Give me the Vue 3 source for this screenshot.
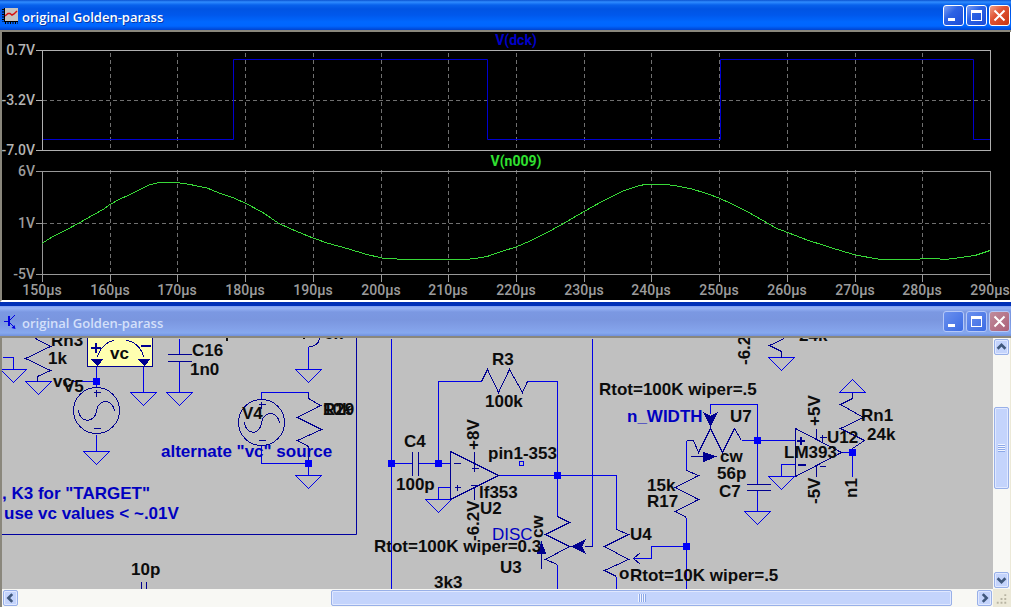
<script setup>
const ticks = [42, 110, 177, 245, 313, 381, 448, 516, 584, 651, 719, 787, 855, 922, 990]
const inner = ticks.slice(1, -1)

const grounds = [
  [13, 369], [38, 381], [143, 392], [179, 392], [96, 451], [308, 369], [308, 475],
  [438, 499], [757, 511], [781, 357], [781, 476],
]
const nodes = [
  [96, 381], [308, 463], [391, 463], [438, 463], [557, 475], [686, 546], [757, 440], [852, 452],
]
const resistors = [
  '35,338 50,346 25,358 50,370 37,376 37,381',
  '308,392 308,398 320,405 297,417 321,429 297,440 308,446 308,463',
  '481,381 487,369 498,392 509,369 522,392 527,381',
  '557,516 569,522 545,534 569,546 545,559 557,564',
  '616,529 628,534 604,546 628,559 604,570 616,576',
  '686,470 698,475 675,487 698,499 675,511 686,517',
  '686,440 693,440 698,452 710,428 722,452 734,428 741,440',
  '784,338 769,345 781,351 781,357',
  '852,448 864,440 840,428 863,417 840,404 852,398 852,392',
]
const labels = [
  [51, 346, 'Rn3'], [48, 364, '1k'], [53, 387, 'vc'], [63, 392, 'V5'], [110, 359, 'vc'],
  [192, 356, 'C16'], [190, 375, '1n0'], [242, 419, 'V4'], [323, 415, 'R29'], [323, 415, '10k'],
  [131, 575, '10p'], [492, 365, 'R3'], [485, 407, '100k'], [404, 447, 'C4'], [396, 490, '100p'],
  [488, 459, 'pin1-353'], [479, 498, 'lf353'], [480, 514, 'U2'], [374, 552, 'Rtot=100K wiper=0.3'],
  [500, 573, 'U3'], [434, 588, '3k3'], [630, 540, 'U4'], [619, 579, 'o'],
  [630, 581, 'Rtot=10K wiper=.5'], [647, 491, '15k'], [647, 507, 'R17'],
  [599, 395, 'Rtot=100K wiper=.5'], [730, 422, 'U7'], [720, 462, 'cw'], [717, 479, '56p'],
  [719, 497, 'C7'], [799, 341, '24k'], [784, 458, 'LM393'], [827, 443, 'U12'],
  [861, 421, 'Rn1'], [867, 440, '24k'], [324, 339, '6k'],
]
const comments = [
  [161, 457, 'alternate "vc" source'], [2, 499, ', K3 for "TARGET"'],
  [4, 519, 'use vc values < ~.01V'], [627, 422, 'n_WIDTH'],
]
const upright = [
  [479, 450, '+8V'], [479, 541, '-6.2V'], [543, 538, 'cw'], [750, 365, '-6.2V'],
  [820, 426, '+5V'], [820, 504, '-5V'], [857, 498, 'n1'],
]
</script>

<template>
  <main class="desk">
    <section class="win">
      <header class="bar">
        <svg class="ico" viewBox="0 0 16 16" aria-hidden="true">
          <path fill="#c6c3c0" d="M2 0h14v14H2z" />
          <path stroke="#000" fill="none" d="M2.500 0v14M2 13.500h14" />
          <path stroke="#000" fill="none" stroke-dasharray="1 1.500" stroke-width="2" d="M1 1v13M3 15h13" />
          <path stroke="#d81010" stroke-width="1.500" fill="none" d="M3 8l3-2.500 2 0 2 1.500 2-1 3-3" />
        </svg>
        <h1>original Golden-parass</h1>
        <div class="ctl">
          <button aria-label="Minimize"><svg viewBox="0 0 21 21"><path fill="#fff" d="M5 13h7v3H5z" /></svg></button>
          <button aria-label="Maximize"><svg viewBox="0 0 21 21"><path fill="#fff" fill-rule="evenodd" d="M5 5h11v11H5zM6 8v7h9V8z" /></svg></button>
          <button class="close" aria-label="Close"><svg viewBox="0 0 21 21"><path stroke="#fff" stroke-width="2" d="M5.500 5.500l10 10M15.500 5.500l-10 10" /></svg></button>
        </div>
      </header>
      <div class="view">
        <svg class="plot" viewBox="2 32 1008 268" role="img" aria-label="Waveforms">
          <g class="grid" transform="translate(.5 .5)">
            <path v-for="x in inner" :key="x" :d="`M${x} 52V150M${x} 169V274`" />
            <path d="M42 100H990M42 223H990" />
          </g>
          <path class="trace square" d="M42 139.500H233.500V59.500H487.500V139.500H720.500V59.500H973.500V139.500H990" />
          <g class="frame" transform="translate(.5 .5)">
            <path d="M35 50H990V150H35M42 50V150M35 100H42" />
            <path class="low" d="M35 171H990V274H35M42 171V274M35 223H42" />
            <path class="low" v-for="x in ticks" :key="x" :d="`M${x} 274V281`" />
          </g>
          <polyline class="trace green" points="42,243.500 52,237 66,230 80,222.500 93,215 104,209 110,204.500 119,199.500 130,194.500 149,185 157,183 167,182.500 177,182.500 190,184.500 207,188 219,193 234,198 246,203.500 262,212 279,223.500 291,229 303,234 313,238 327,243 340,246.500 352,250 367,254.500 382,258 397,259 413,260 418,259.500 465,259.500 475,258.500 487,256.500 500,252 516,247 530,241 550,231 567,221.500 584,211.500 601,202 623,191 640,185.500 645,184.500 667,184.500 680,186.500 692,189 708,194 719,198 732,204 748,212 762,220 777,228.500 789,233 807,240 829,247 845,252 858,255.500 875,258.500 881,259.500 917,259.500 923,258.500 935,258.500 945,259.500 957,258 975,255.500 990,250.500" />
          <g class="axis">
            <text x="35" y="55" text-anchor="end">0.7V</text>
            <text x="35" y="105" text-anchor="end">-3.2V</text>
            <text x="35" y="155" text-anchor="end">-7.0V</text>
            <g class="lowtext">
              <text x="35" y="176" text-anchor="end">6V</text>
              <text x="35" y="228" text-anchor="end">1V</text>
              <text x="35" y="279" text-anchor="end">-5V</text>
              <text v-for="(x, i) in ticks" :key="x" :x="x" y="295" text-anchor="middle">{{ 150 + i * 10 }}µs</text>
            </g>
            <text class="name dck" x="516" y="45" text-anchor="middle">V(dck)</text>
            <text class="name n9" x="516" y="166" text-anchor="middle">V(n009)</text>
          </g>
        </svg>
      </div>
    </section>

    <section class="win second">
      <header class="bar idle">
        <svg class="ico" viewBox="0 0 16 16" aria-hidden="true">
          <path fill="none" stroke="#0000e0" stroke-width="2" d="M7 2v10" />
          <path fill="none" stroke="#0000e0" d="M2 7.500h5M8 6l5-5M8 9l5 5" />
          <path fill="#0000e0" d="M13.500 15l-4-1 3-3z" />
        </svg>
        <h2>original Golden-parass</h2>
        <div class="ctl">
          <button aria-label="Minimize"><svg viewBox="0 0 21 21"><path fill="#fff" d="M5 13h7v3H5z" /></svg></button>
          <button aria-label="Maximize"><svg viewBox="0 0 21 21"><path fill="#fff" fill-rule="evenodd" d="M5 5h11v11H5zM6 8v7h9V8z" /></svg></button>
          <button class="close" aria-label="Close"><svg viewBox="0 0 21 21"><path stroke="#fff" stroke-width="2" d="M5.500 5.500l10 10M15.500 5.500l-10 10" /></svg></button>
        </div>
      </header>
      <div class="work">
        <div class="sheet">
          <svg class="schematic" width="991" height="251" viewBox="2 338 991 251" role="img" aria-label="Schematic">
            <path class="box" d="M356.500 338V534.500H2" />
            <g transform="translate(.5 .5)">
              <g class="wire">
                <path d="M2 357H13V369M72 381H96M96 366V386M96 434V451M143 366V392M179 338V354M179 361V392" />
                <path d="M308 346V369M261 398V392H308M261 445V463H308V475" />
                <path d="M391 338V589M391 463H412M418 463H450M438 463V381H481M527 381H557V516M498 475H616V529M557 564V589M616 576V589" />
                <path d="M450 487H438V499M592 338V546H584M633 558H651V546H686M686 517V589M686 440V470" />
                <path d="M710 413V404H757V484M741 440H795M757 490V511M795 464H781V476M841 452H852V476" />
                <path v-for="g in grounds" :key="g.join()" :d="`M${g[0] - 13} ${g[1]}h26l-13 13z`" />
                <path d="M839 392h26l-13 -13z" />
                <path d="M519 461h4v4h-4z" />
              </g>
              <g class="part">
                <polyline v-for="r in resistors" :key="r" :points="r" />
                <path class="note" d="M87 330H152V366H87z" />
                <path d="M97 357C98 350 105 341 114 340M126 340C135 341 142 349 143 357" />
                <path class="thick" d="M90 347h10M95 342v10M140 345h10" />
                <path class="solid" d="M91 359h11l-5 6zM138 359h11l-5 6z" />
                <circle cx="96" cy="410" r="23" />
                <path d="M93 392h7M96 389v7M93 428h7M78 410C79 423 95 423 96 410C98 398 113 398 114 411" />
                <circle cx="261" cy="422" r="23" />
                <path d="M258 404h7M261 401v7M258 440h7M244 422C245 435 260 435 261 422C263 410 278 410 279 423" />
                <path d="M167 354H191M167 361H191M319 338C318 344 313 346 308 346" />
                <path d="M412 451V475M418 451V475M141 581V589M146 581V589M746 484H770M746 490H770" />
                <path d="M450 451V499L498 475zM453 463h7M454 487h6M457 484v6M474 451V471M471 468h7M470 485h9M474 486V499" />
                <path d="M795 428V476L841 452zM816 428V439M816 464V476M819 437h7M822 434v7M819 466h6" />
                <path class="thick" d="M796 440h8M800 436v8M797 464h8" />
                <path d="M541 568V552M592 546H584M690 456H703M640 552L633 558L640 564" />
                <path class="solid" d="M541 542l-4 11h8zM572 546l12-6-3 6 3 6zM704 413l6 3 6-3-6 12zM703 452v9l12-5z" />
              </g>
              <rect v-for="n in nodes" :key="n.join()" class="node" :x="n[0] - 3.500" :y="n[1] - 3.500" width="7" height="7" />
            </g>
            <path class="ink" d="M226 338h2v3h-2zM303 338h2v1h-2z" />
            <text v-for="(l, i) in labels" :key="i" :x="l[0]" :y="l[1]">{{ l[2] }}</text>
            <text v-for="l in comments" :key="l[2]" class="comment" :x="l[0]" :y="l[1]">{{ l[2] }}</text>
            <text class="comment plain" x="492" y="540">DISC</text>
            <text v-for="(l, i) in upright" :key="i" :transform="`translate(${l[0]} ${l[1]}) rotate(-90)`">{{ l[2] }}</text>
          </svg>
        </div>
        <div class="scroll tall">
          <button aria-label="Scroll up"><svg viewBox="0 0 15 15"><path d="M3 9.500L7.500 5 12 9.500" /></svg></button>
          <div class="gap1"></div>
          <div class="thumb"><i></i></div>
          <div class="gap2"></div>
          <button aria-label="Scroll down"><svg viewBox="0 0 15 15"><path d="M3 5.500L7.500 10 12 5.500" /></svg></button>
        </div>
        <div class="scroll wide">
          <button aria-label="Scroll left"><svg viewBox="0 0 15 15"><path d="M9.500 3L5 7.500 9.500 12" /></svg></button>
          <div class="gap1"></div>
          <div class="thumb"><i></i></div>
          <div class="gap2"></div>
          <button aria-label="Scroll right"><svg viewBox="0 0 15 15"><path d="M5.500 3L10 7.500 5.500 12" /></svg></button>
        </div>
        <div class="corner">
          <svg viewBox="0 0 18 18" aria-hidden="true"><path fill="#b8b4a2" d="M12 5h2v2h-2zM8 9h2v2H8zM12 9h2v2h-2zM4 13h2v2H4zM8 13h2v2H8zM12 13h2v2h-2z" /></svg>
        </div>
      </div>
    </section>
  </main>
</template>

<style>
body {
  margin: 0;
  background: #ece9d8;
}
</style>

<style scoped>
.desk {
  display: flex;
  flex-direction: column;
  min-height: 100vh;
  font-family: "Liberation Sans", Arial, sans-serif;
}
.win {
  display: flex;
  flex-direction: column;
}
.second {
  flex: 1;
}
.bar {
  display: flex;
  align-items: center;
  box-sizing: border-box;
  height: 32px;
  padding: 3px 1px 2px 2px;
  border-bottom: 2px solid #8a877c;
  background: linear-gradient(#0a52d0 0, #2f8cff 2px, #0862ec 5px, #0054e3 9px, #0058ec 15px, #0068ff 22px, #0066ff 26px, #0044d0 30px);
}
.bar.idle {
  background: linear-gradient(#7c9cf0 0, #98b4f6 2px, #7b98e2 6px, #7a96df 14px, #82a0e8 22px, #86a8ee 27px, #7090dc 30px);
}
.ico {
  width: 16px;
  height: 16px;
  margin-right: 4px;
}
h1,
h2 {
  flex: 1;
  margin: 2px 0 0;
  color: #fff;
  font: 600 13px/18px "Open Sans", "Noto Sans", sans-serif;
  text-shadow: 1px 1px 0 #0838a8;
}
.idle h2 {
  color: #d4e0fa;
  text-shadow: none;
}
.ctl {
  display: flex;
  gap: 2px;
}
.ctl button {
  box-sizing: border-box;
  width: 21px;
  height: 21px;
  padding: 0;
  border: 1px solid #fff;
  border-radius: 3px;
  background: linear-gradient(135deg, #7ea0f4, #2c62e4 40%, #1c4cd8);
}
.ctl svg {
  display: block;
  width: 21px;
  height: 21px;
  margin: -1px;
}
.ctl .close {
  background: linear-gradient(135deg, #f0a088, #e05434 40%, #c83410);
}
.idle .ctl button {
  border-color: #b4c8f8;
  background: linear-gradient(135deg, #6a90ee, #3c6ce4);
}
.idle .ctl .close {
  background: linear-gradient(135deg, #c08c9c, #ac6078);
}
.view {
  border-left: 2px solid #8a877c;
  border-right: 1px solid #fff;
  background: #000;
  border-bottom: 2px solid #fff;
}
.win:first-child {
  border-bottom: 4px solid #0030b8;
}
.plot {
  display: block;
  width: 100%;
}
.grid path {
  stroke: #707070;
  stroke-dasharray: 4 3;
  shape-rendering: crispEdges;
}
.frame path {
  fill: none;
  stroke: #b0b0b0;
  shape-rendering: crispEdges;
}
.frame .low {
  stroke: #989898;
}
.trace {
  fill: none;
}
.square {
  stroke: #0000d0;
}
.green {
  stroke: #38d838;
  shape-rendering: crispEdges;
}
.axis text {
  fill: #b4b4b4;
  font: 500 14px Roboto, sans-serif;
}
.axis .lowtext text {
  fill: #9c9c9c;
}
.axis .name {
  font-weight: 700;
}
.axis .dck {
  fill: #0000c8;
}
.axis .n9 {
  fill: #30e030;
}
.work {
  flex: 1;
  display: grid;
  grid-template-columns: minmax(0, 1fr) 17px;
  grid-template-rows: minmax(251px, 1fr) 18px;
  border-left: 2px solid #8a877c;
  border-right: 1px solid #ece9d8;
}
.sheet {
  overflow: hidden;
  background: #c0c0c0;
}
.schematic {
  display: block;
}
.schematic text {
  fill: #0c0c0c;
  font: 700 17px "Liberation Sans", Arial, sans-serif;
}
.schematic .comment {
  fill: #0000c0;
}
.schematic .plain {
  font-weight: 400;
}
.ink {
  fill: #0c0c0c;
}
.box {
  fill: none;
  stroke: #0000a0;
}
.wire path {
  fill: none;
  stroke: #0000e8;
  shape-rendering: crispEdges;
}
.part path,
.part polyline,
.part circle {
  fill: none;
  stroke: #000090;
  shape-rendering: crispEdges;
}
.part .note {
  fill: #ffffb0;
}
.part .thick {
  stroke-width: 2;
}
.part .solid {
  fill: #000090;
}
.node {
  fill: #0000f8;
}
.scroll {
  display: flex;
  background: #f8f8f4;
}
.tall {
  flex-direction: column;
  padding: 1px;
}
.wide {
  padding: 1px;
}
.scroll button,
.thumb {
  box-sizing: border-box;
  flex: none;
  border: 1px solid #98b0e8;
  border-radius: 2px;
  background: #c4d4fc;
  box-shadow: inset 0 0 0 1px #e0e8ff;
}
.scroll button {
  width: 15px;
  height: 16px;
  padding: 0;
}
.scroll button svg {
  display: block;
  width: 13px;
  height: 14px;
}
.scroll button path {
  fill: none;
  stroke: #40587c;
  stroke-width: 3;
}
.thumb {
  display: grid;
  place-items: center;
}
.tall .gap1 {
  flex: 52;
}
.tall .gap2 {
  flex: 84;
}
.tall .thumb {
  flex: 81;
}
.wide .gap1 {
  flex: 314;
}
.wide .gap2 {
  flex: 25;
}
.wide .thumb {
  flex: 620;
}
.thumb i {
  width: 8px;
  height: 8px;
  background: repeating-linear-gradient(90deg, #f0f4ff 0 1px, #8ca8e8 1px 2px);
}
.tall .thumb i {
  width: 7px;
  background: repeating-linear-gradient(#f0f4ff 0 1px, #8ca8e8 1px 2px);
}
.corner {
  background: #ece9d8;
}
.corner svg {
  display: block;
  width: 17px;
  height: 18px;
}
</style>
